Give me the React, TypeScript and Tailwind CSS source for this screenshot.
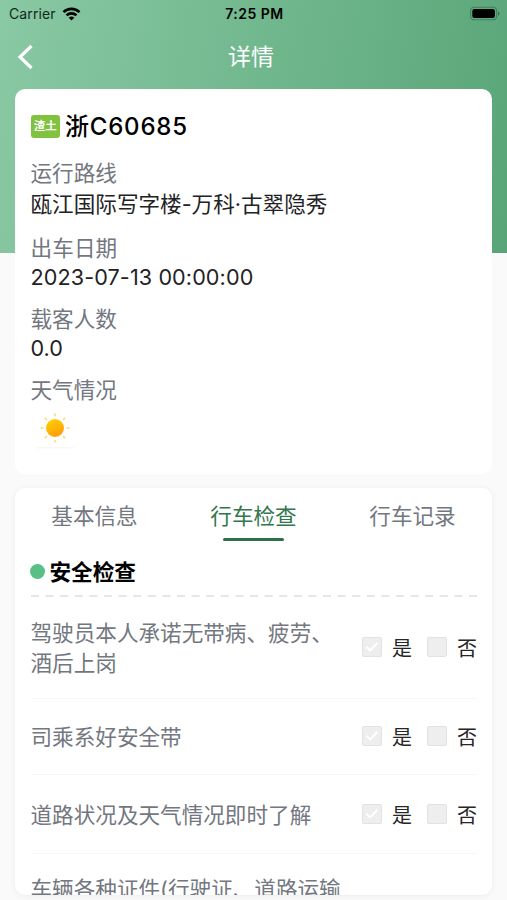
import clsx from 'clsx';

interface Field {
  label: string;
  value: string;
  className: string;
}

const fields: Field[] = [
  { label: '运行路线', value: '瓯江国际写字楼-万科·古翠隐秀', className: 'h-[76px] leading-[31px]' },
  { label: '出车日期', value: '2023-07-13 00:00:00', className: 'h-[71px] leading-[29px] tracking-[0.1px]' },
  { label: '载客人数', value: '0.0', className: 'h-[71px] leading-[29px]' },
];

const tabs = ['基本信息', '行车检查', '行车记录'];

const checks = [
  { text: '驾驶员本人承诺无带病、疲劳、酒后上岗', className: 'h-[102px]' },
  { text: '司乘系好安全带', className: 'h-[76px]' },
  { text: '道路状况及天气情况即时了解', className: 'h-[79px]' },
];

function StatusBar() {
  return (
    <div className="grid h-7 grid-cols-3 items-center pb-px pl-[9px] pr-[7px] text-black">
      <div className="flex items-center gap-1.5 text-[14px] tracking-[0.1px] text-[#12281b]">
        <span>Carrier</span>
        <svg className="text-black" width="19" height="14" viewBox="0 0 18 14" fill="none" stroke="currentColor" strokeWidth="2.6">
          <path d="M1 5.2a11.3 11.3 0 0 1 16 0" />
          <path d="M4 8.4a7.1 7.1 0 0 1 10 0" />
          <path d="M9 13.6 6.2 10.8a4 4 0 0 1 5.6 0Z" fill="currentColor" stroke="none" />
        </svg>
      </div>
      <div className="text-center text-[14px] font-semibold tracking-[0.5px]">7:25 PM</div>
      <svg className="justify-self-end" width="31" height="15" viewBox="0 0 31 15">
        <rect x="1.6" y="1.2" width="26" height="12.6" rx="3.6" fill="none" stroke="#41805c" strokeWidth="1.1" />
        <rect x="3.3" y="2.9" width="22.6" height="9.2" rx="2" fill="#000" />
        <path d="M29 5.4c1.9.6 1.9 3.6 0 4.2Z" fill="#3b6b50" />
      </svg>
    </div>
  );
}

function SunIcon() {
  return (
    <svg width="30" height="30" viewBox="0 0 30 30">
      <defs>
        <linearGradient id="sun" x1="0" y1="0" x2="0.4" y2="1">
          <stop offset="0" stopColor="#ffd500" />
          <stop offset="1" stopColor="#ff9f0a" />
        </linearGradient>
      </defs>
      <circle cx="15" cy="15" r="9" fill="url(#sun)" />
      <g stroke="#ffdc70" strokeWidth="1.7" strokeLinecap="round">
        <path d="M15 1.2v1.2M15 27.6v1.2M1.2 15h1.8M27 15h1.8M5.4 5.4l1 1M23.6 23.6l1 1M5.4 24.6l1-1M23.6 6.4l1-1" />
      </g>
    </svg>
  );
}

function CheckBox({ label, checked }: { label: string; checked?: boolean }) {
  return (
    <div className="flex items-center gap-[10px]">
      <div className="mb-px flex size-5 items-center justify-center rounded-[2px] border border-[#e2e2e2] bg-[#eeeeee]">
        {checked && (
          <svg width="14" height="12" viewBox="0 0 14 12" fill="none" stroke="#fff" strokeWidth="2">
            <path d="m1.5 5.8 3.6 3.6 7.4-7.6" />
          </svg>
        )}
      </div>
      <span className="pt-[3px] text-[20px] leading-7 text-[#262626]">{label}</span>
    </div>
  );
}

export default function App() {
  return (
    <div className="h-[900px] w-full overflow-hidden bg-[#fafafa] bg-[linear-gradient(100deg,#89c9a4_0%,#59a578_100%)] bg-[length:100%_253px] bg-no-repeat font-['Inter','Noto_Sans_CJK_SC',sans-serif]">
      <StatusBar />

      {/* Nav bar */}
      <div className="grid h-[61px] grid-cols-[60px_1fr_60px] items-center pb-[3px] text-white">
        <svg className="ml-[17px]" width="17" height="26" viewBox="0 0 17 26" fill="none" stroke="currentColor" strokeWidth="3.2">
          <path d="M14.5 2 3 13l11.5 11" />
        </svg>
        <h1 className="pr-[5px] text-center text-[23px]">详情</h1>
      </div>

      {/* Trip summary */}
      <section className="mx-[15px] h-[385px] rounded-[10px] bg-white px-[15.5px] pt-[22px] text-[21.6px]">
        <div className="mb-[15px] flex h-8 items-center gap-[5px]">
          <span className="mb-px flex h-[23px] w-[29.5px] items-center justify-center rounded-[3px] bg-[#81c240] text-[11.5px] font-bold leading-none text-white">
            渣土
          </span>
          <span className="text-[24px] font-medium tracking-[0.8px] text-black">浙C60685</span>
        </div>
        {fields.map((field) => (
          <div key={field.label} className={field.className}>
            <div className="text-[#73777f]">{field.label}</div>
            <div className="text-[#222224]">{field.value}</div>
          </div>
        ))}
        <div className="leading-[29px] text-[#73777f]">天气情况</div>
        <div className="ml-1 mt-[4px] flex h-[38px] w-10 items-center justify-center rounded-[3px] shadow-[0_2px_3px_-1px_#0000000d]">
          <SunIcon />
        </div>
      </section>

      {/* Inspection */}
      <section className="mx-[15px] mt-3.5 h-[407px] overflow-hidden rounded-[10px] bg-white text-[21.6px] shadow-[0_1px_6px_#0000000f]">
        <div className="grid h-[53px] grid-cols-3">
          {tabs.map((tab, i) => (
            <div
              key={tab}
              className={clsx('flex flex-col items-center pt-[12.5px]', i === 1 ? 'text-[#33764e]' : 'text-[#73777f]')}
            >
              <span className="leading-[31px]">{tab}</span>
              {i === 1 && <span className="mt-[6.5px] h-[2.5px] w-[61px] shrink-0 rounded-full bg-[#2d7148]" />}
            </div>
          ))}
        </div>
        <div className="pl-[15.5px] pr-3.5">
          <div className="flex h-[54px] items-center gap-[5px] pt-[7px]">
            <span className="-ml-px size-[15px] rounded-full bg-[#5abf85]" />
            <h2 className="pt-px font-bold text-black">安全检查</h2>
          </div>
          <svg className="block" width="447" height="2">
            <path d="M0 1h448" stroke="#e6e6e6" strokeWidth="2" strokeDasharray="8 6.6" />
          </svg>
          {checks.map((check) => (
            <div
              key={check.text}
              className={clsx('flex items-center justify-between border-b border-[#f7f7f7]', check.className)}
            >
              <p className="w-[310px] pt-px leading-[30px] text-[#73777f]">{check.text}</p>
              <div className="flex gap-[15px] pr-px">
                <CheckBox label="是" checked />
                <CheckBox label="否" />
              </div>
            </div>
          ))}
          <p className="w-[330px] pt-5 leading-[30px] text-[#73777f]">车辆各种证件(行驶证、道路运输证)</p>
        </div>
      </section>
    </div>
  );
}
